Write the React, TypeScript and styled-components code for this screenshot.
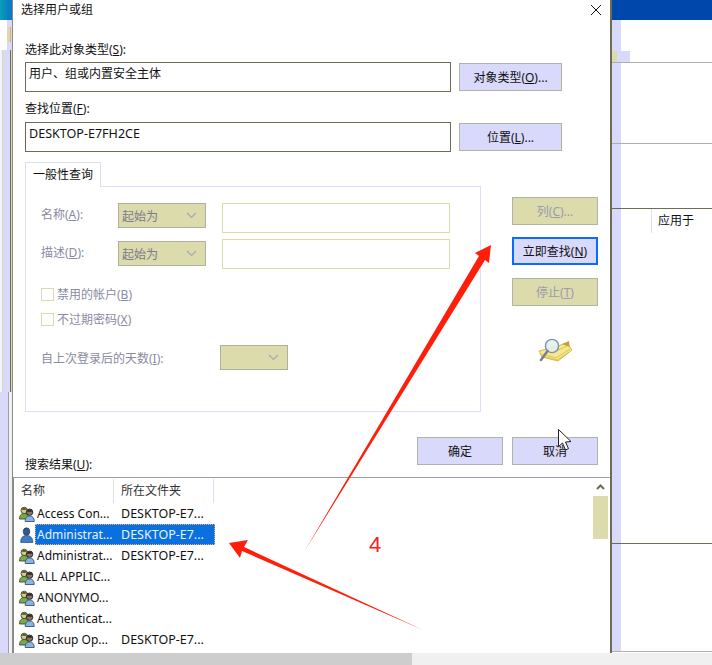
import React from "react";
import styled, { createGlobalStyle } from "styled-components";

const FONT = `"Noto Sans", "Noto Sans CJK SC", sans-serif`;
const LAVENDER = "#d9d9fb";
const KHAKI = "#dbdbab";
const OLIVE = "#6d6d55";

const Global = createGlobalStyle`
  html, body { margin: 0; padding: 0; background: #fff; }
  body { font-family: ${FONT}; font-size: 12px; color: #111; }
  * { box-sizing: border-box; }
`;

const Page = styled.div`
  position: relative;
  width: 712px;
  height: 665px;
  overflow: hidden;
  display: flex;
  flex-direction: column;
`;
const Workspace = styled.div`
  display: flex;
  height: 653px;
`;
const LeftStrip = styled.div`
  width: 12px;
  display: flex;
  flex-direction: column;
`;
const StripBlue = styled.div`
  height: 20px;
  background: linear-gradient(90deg, #0aa0b8 0, #0a7fc4 8px, #0a78c8 12px);
`;
const StripTop = styled.div`
  height: 30px;
  padding: 7px 1px 0 7px;
  background: linear-gradient(90deg, #fff 0 7px, ${LAVENDER} 7px);
`;
const StripTab = styled.div`
  height: 15px;
  background: ${KHAKI};
  border-right: 1px solid #e0b060;
`;
const StripMid = styled.div`
  height: 342px;
  background: linear-gradient(90deg, #f4f4ff 0 2px, ${KHAKI} 2px 3px, ${LAVENDER} 3px 10px, ${OLIVE} 10px 11px, ${KHAKI} 11px);
`;
const StripLow = styled.div`
  flex: 1;
  background: linear-gradient(90deg, ${LAVENDER} 0 8px, #a0a0a0 8px 9px, #f0f0f8 9px);
`;

const Dialog = styled.div`
  width: 600px;
  background: #fff;
  border-left: 1px solid #8a8a8a;
  border-right: 2px solid ${OLIVE};
  display: flex;
  flex-direction: column;
`;
const TitleBar = styled.div`
  height: 20px;
  padding: 0 9px 0 8px;
  display: flex;
  align-items: center;
  justify-content: space-between;
  line-height: 20px;
`;
const TopForm = styled.div`
  margin: 22px 0 0 12px;
  display: grid;
  grid-template-columns: 426px 103px;
  column-gap: 8px;
  align-items: center;
`;
const FieldLabel = styled.div<{ $next?: boolean }>`
  grid-column: 1 / 3;
  height: 16px;
  line-height: 16px;
  margin-top: ${(p) => (p.$next ? 9 : 0)}px;
  margin-bottom: ${(p) => (p.$next ? 5 : 4)}px;
`;
const ReadBox = styled.div<{ $wide?: boolean }>`
  height: 30px;
  border: 1px solid ${OLIVE};
  padding: 2px 3px;
  line-height: 18px;
  font-size: ${(p) => (p.$wide ? 12.55 : 12)}px;
`;
const Button = styled.div<{ $kind?: "focus" | "disabled"; $w?: number }>`
  height: 28px;
  ${(p) => (p.$w ? `width: ${p.$w}px;` : "")}
  display: flex;
  align-items: center;
  justify-content: center;
  padding-bottom: 1px;
  background: ${(p) => (p.$kind === "disabled" ? KHAKI : LAVENDER)};
  border: ${(p) => (p.$kind === "focus" ? "2px solid #0a6cff" : "1px solid #b2b2a6")};
  color: ${(p) => (p.$kind === "disabled" ? "#9a9ab0" : "#111")};
`;
const Main = styled.div`
  margin: 10px 0 0 12px;
  display: grid;
  grid-template-columns: 456px 86px;
  column-gap: 31px;
`;
const Tab = styled.div`
  width: 76px;
  height: 25px;
  margin-bottom: -1px;
  padding-bottom: 2px;
  position: relative;
  z-index: 1;
  background: #fff;
  border: 1px solid #dcdcfc;
  border-bottom: none;
  display: flex;
  align-items: center;
  justify-content: center;
`;
const Panel = styled.div`
  height: 226px;
  border: 1px solid #dcdcfc;
  padding: 16px 0 0 15px;
  color: #8a8aa0;
`;
const SearchRow = styled.div<{ $top?: number }>`
  display: grid;
  grid-template-columns: 77px 88px 228px;
  column-gap: 0;
  margin-top: ${(p) => p.$top ?? 0}px;
  height: 30px;
`;
const RowLabel = styled.div<{ $drop?: number }>`
  height: 25px;
  line-height: 24px;
  margin-top: ${(p) => p.$drop ?? 0}px;
`;
const Select = styled.div<{ $drop?: number; $w?: number }>`
  height: 25px;
  width: ${(p) => p.$w ?? 88}px;
  margin-top: ${(p) => p.$drop ?? 0}px;
  background: ${KHAKI};
  border: 1px solid #b0b0a0;
  padding: 0 8px 0 3px;
  display: flex;
  align-items: center;
  justify-content: space-between;
  color: #7a7a90;
`;
const TextEntry = styled.div`
  height: 30px;
  width: 228px;
  margin-left: 16px;
  background: #fff;
  border: 1px solid ${KHAKI};
`;
const CheckRow = styled.div<{ $top: number }>`
  height: 13px;
  margin-top: ${(p) => p.$top}px;
  display: flex;
  align-items: center;
  gap: 3px;
  line-height: 13px;
`;
const CheckBox = styled.div`
  width: 13px;
  height: 13px;
  border: 1px solid ${KHAKI};
  background: #fff;
`;
const DaysRow = styled.div`
  margin-top: 19px;
  display: flex;
  align-items: center;
`;
const DaysLabel = styled.div`
  width: 179px;
`;
const SideColumn = styled.div`
  padding-top: 35px;
  display: flex;
  flex-direction: column;
`;
const SideGap = styled.div<{ $h: number }>`
  height: ${(p) => p.$h}px;
`;
const SearchArt = styled.div`
  margin: 32px 0 0 26px;
  height: 26px;
`;
const Footer = styled.div`
  height: 65px;
  padding: 0 12px 0 12px;
  display: flex;
  align-items: flex-end;
  justify-content: space-between;
`;
const ResultsLabel = styled.div`
  line-height: 16px;
  margin-bottom: 4px;
`;
const FooterButtons = styled.div`
  display: flex;
  gap: 9px;
  margin-bottom: 12px;
`;
const ListBox = styled.div`
  flex: 1;
  min-height: 0;
  border-top: 1px solid #9c9ca4;
  border-left: 1px solid #8a8a8a;
  margin-left: 0;
  display: flex;
  justify-content: space-between;
`;
const ListBody = styled.div`
  width: 580px;
  padding-top: 1px;
`;
const HeaderRow = styled.div`
  height: 24px;
  display: flex;
  color: #333;
`;
const HeaderCell = styled.div<{ $w: number }>`
  width: ${(p) => p.$w}px;
  padding-left: 7px;
  line-height: 24px;
  border-right: 1px solid #dcdcfc;
`;
const ResultRow = styled.div`
  height: 21px;
  padding-left: 5px;
  display: flex;
  align-items: center;
`;
const ResultIcon = styled.div`
  width: 16px;
  height: 16px;
  margin-right: 0;
  flex: none;
`;
const ResultCells = styled.div<{ $on?: boolean }>`
  width: 180px;
  height: 21px;
  margin-left: 0;
  display: flex;
  align-items: center;
  color: ${(p) => (p.$on ? "#e8f2ff" : "#111")};
  background: ${(p) => (p.$on ? "#0a70e0" : "transparent")};
  outline: ${(p) => (p.$on ? "1px dotted #e8b860" : "none")};
  outline-offset: -1px;
`;
const NameCell = styled.div`
  width: 86px;
  padding-left: 2px;
  white-space: nowrap;
  overflow: hidden;
`;
const FolderCell = styled.div`
  white-space: nowrap;
  font-size: 12.5px;
`;
const ScrollBar = styled.div`
  width: 15px;
  margin-right: 2px;
  display: flex;
  flex-direction: column;
  align-items: center;
`;
const ScrollArrow = styled.div`
  height: 18px;
  padding-top: 6px;
  display: flex;
`;
const ScrollThumb = styled.div`
  width: 15px;
  height: 43px;
  background: ${KHAKI};
`;
const RightPane = styled.div`
  flex: 1;
  display: flex;
  flex-direction: column;
`;
const BlueBar = styled.div`
  height: 20px;
  background: #0047ab;
`;
const RightSection = styled.div<{ $h: number; $dark?: boolean }>`
  height: ${(p) => p.$h}px;
  border-bottom: 1px solid ${(p) => (p.$dark ? OLIVE : "#b0b0a6")};
  background: linear-gradient(90deg, ${LAVENDER} 9px, #fff 9px);
  display: flex;
  flex-direction: column;
  justify-content: flex-start;
`;
const RightTabMark = styled.div`
  width: 18px;
  height: 11px;
  margin-top: auto;
  background: linear-gradient(90deg, ${KHAKI} 5px, ${LAVENDER} 5px);
`;
const AppliedHead = styled.div`
  margin-left: 39px;
  height: 24px;
  padding-left: 6px;
  line-height: 24px;
  border-left: 1px solid #dcdcfc;
`;
const BottomScroll = styled.div`
  height: 12px;
  background: #f0f0f0;
`;
const BottomThumb = styled.div`
  width: 412px;
  height: 12px;
  background: #cdcdcd;
`;
const Annotation = styled.svg`
  position: absolute;
  left: 0;
  top: 0;
  width: 712px;
  height: 665px;
  pointer-events: none;
`;
const StepNumber = styled.div`
  position: absolute;
  left: 369px;
  top: 531px;
  font-family: "Liberation Sans", sans-serif;
  font-size: 22px;
  line-height: 28px;
  color: #ff2020;
`;

const U = styled.span`
  text-decoration: underline;
  text-underline-offset: 1px;
  text-decoration-thickness: 1px;
`;

const Chevron = () => (
  <svg width="11" height="7" viewBox="0 0 11 7">
    <path d="M1 1l4.5 4.5L10 1" fill="none" stroke="#a8a8b4" strokeWidth="1.2" />
  </svg>
);

const GroupIcon = () => (
  <svg width="16" height="16" viewBox="0 0 16 16">
    <circle cx="5.2" cy="4.4" r="3.2" fill="#d8c88a" stroke="#3a4a28" strokeWidth="0.9" />
    <path d="M2 3.6c.6-2 5.4-2.4 6.4 0-2 .6-4.4.6-6.4 0z" fill="#5a5a30" />
    <path d="M0.5 13c0-4 2-5.5 4.7-5.5S10 9 10 13z" fill="#7aa84a" stroke="#34502a" strokeWidth="0.9" />
    <circle cx="10.6" cy="6.2" r="3.2" fill="#8a7464" stroke="#222" strokeWidth="0.9" />
    <path d="M7.6 5.4c.7-2 5.2-2.2 6 0-2 .6-4 .6-6 0z" fill="#2a2a2a" />
    <path d="M6.2 15.5c0-4 1.8-5.5 4.4-5.5s4.6 1.5 4.6 5.5z" fill="#8ab4e0" stroke="#34547a" strokeWidth="0.9" />
  </svg>
);

const UserIcon = () => (
  <svg width="16" height="16" viewBox="0 0 16 16">
    <ellipse cx="7.5" cy="4.6" rx="3.3" ry="3.8" fill="#2e5a8e" stroke="#1c3a60" strokeWidth="0.7" />
    <path d="M1.8 15.5c-.4-4.6 2-7 5.7-7s6.6 2.4 6.3 7z" fill="#3f7cc4" stroke="#1f4a80" strokeWidth="0.7" />
  </svg>
);

const SearchFolder = () => (
  <svg width="36" height="26" viewBox="0 0 36 26">
    <path d="M1 13l12-3 16-5 5 7-14 11-16-4z" fill="#f6e88e" stroke="#c8a838" strokeWidth="0.8" />
    <path d="M3 16l15 4 14-9M5 18.6l14 3.4 12-8M16 14l13-6" fill="none" stroke="#d8b848" strokeWidth="0.8" />
    <path d="M24 6l7-3 .6 6z" fill="#c8a030" />
    <circle cx="14" cy="8" r="6.6" fill="#e4f0ec" fillOpacity="0.85" stroke="#7a94b4" strokeWidth="1.4" />
    <path d="M9.5 13L3 22" stroke="#7c7c8c" strokeWidth="2.4" strokeLinecap="round" />
  </svg>
);

const rows = [
  { name: "Access Con...", folder: "DESKTOP-E7..." },
  { name: "Administrat...", folder: "DESKTOP-E7...", selected: true },
  { name: "Administrat...", folder: "DESKTOP-E7..." },
  { name: "ALL APPLIC...", folder: "" },
  { name: "ANONYMO...", folder: "" },
  { name: "Authenticat...", folder: "" },
  { name: "Backup Op...", folder: "DESKTOP-E7..." },
];

export default function App() {
  return (
    <Page>
      <Global />
      <Workspace>
        <LeftStrip>
          <StripBlue />
          <StripTop>
            <StripTab />
          </StripTop>
          <StripMid />
          <StripLow />
        </LeftStrip>
        <Dialog>
          <TitleBar>
            <span>选择用户或组</span>
            <svg width="10" height="10" viewBox="0 0 10 10">
              <path d="M0 0l10 10M10 0L0 10" stroke="#111" strokeWidth="1" />
            </svg>
          </TitleBar>
          <TopForm>
            <FieldLabel>选择此对象类型(<U>S</U>):</FieldLabel>
            <ReadBox>用户、组或内置安全主体</ReadBox>
            <Button><span>对象类型(<U>O</U>)...</span></Button>
            <FieldLabel $next>查找位置(<U>F</U>):</FieldLabel>
            <ReadBox $wide>DESKTOP-E7FH2CE</ReadBox>
            <Button><span>位置(<U>L</U>)...</span></Button>
          </TopForm>
          <Main>
            <div>
              <Tab>一般性查询</Tab>
              <Panel>
                <SearchRow>
                  <RowLabel>名称(<U>A</U>):</RowLabel>
                  <Select>起始为<Chevron /></Select>
                  <TextEntry />
                </SearchRow>
                <SearchRow $top={6}>
                  <RowLabel $drop={2}>描述(<U>D</U>):</RowLabel>
                  <Select $drop={2}>起始为<Chevron /></Select>
                  <TextEntry />
                </SearchRow>
                <CheckRow $top={19}><CheckBox /><span>禁用的帐户(<U>B</U>)</span></CheckRow>
                <CheckRow $top={12}><CheckBox /><span>不过期密码(<U>X</U>)</span></CheckRow>
                <DaysRow>
                  <DaysLabel>自上次登录后的天数(<U>I</U>):</DaysLabel>
                  <Select $w={68}><span /><Chevron /></Select>
                </DaysRow>
              </Panel>
            </div>
            <SideColumn>
              <Button $kind="disabled"><span>列(<U>C</U>)...</span></Button>
              <SideGap $h={12} />
              <Button $kind="focus"><span>立即查找(<U>N</U>)</span></Button>
              <SideGap $h={13} />
              <Button $kind="disabled"><span>停止(<U>T</U>)</span></Button>
              <SearchArt><SearchFolder /></SearchArt>
            </SideColumn>
          </Main>
          <Footer>
            <ResultsLabel>搜索结果(<U>U</U>):</ResultsLabel>
            <FooterButtons>
              <Button $w={86}>确定</Button>
              <Button $w={86}>取消</Button>
            </FooterButtons>
          </Footer>
          <ListBox>
            <ListBody>
              <HeaderRow>
                <HeaderCell $w={100}>名称</HeaderCell>
                <HeaderCell $w={100}>所在文件夹</HeaderCell>
              </HeaderRow>
              {rows.map((r, i) => (
                <ResultRow key={i}>
                  <ResultIcon>{r.selected ? <UserIcon /> : <GroupIcon />}</ResultIcon>
                  <ResultCells $on={r.selected}>
                    <NameCell>{r.name}</NameCell>
                    <FolderCell>{r.folder}</FolderCell>
                  </ResultCells>
                </ResultRow>
              ))}
            </ListBody>
            <ScrollBar>
              <ScrollArrow>
                <svg width="9" height="6" viewBox="0 0 9 6">
                  <path d="M1 5l3.5-3.5L8 5" fill="none" stroke={OLIVE} strokeWidth="2" />
                </svg>
              </ScrollArrow>
              <ScrollThumb />
            </ScrollBar>
          </ListBox>
        </Dialog>
        <RightPane>
          <BlueBar />
          <RightSection $h={43}><RightTabMark /></RightSection>
          <RightSection $h={81} />
          <RightSection $h={65} $dark />
          <RightSection $h={335} $dark><AppliedHead>应用于</AppliedHead></RightSection>
          <RightSection $h={108} />
        </RightPane>
      </Workspace>
      <BottomScroll><BottomThumb /></BottomScroll>
      <Annotation viewBox="0 0 712 665">
        <polygon points="304,552 479,256 475,253 491,245 489,263 485,260" fill="#ff1e0a" />
        <polygon points="423,630 244,547 248,540 229,543 240,558 242,551" fill="#ff1e0a" />
        <path d="M558.5 429.5v17l4-3.5 3 7 3-1.3-3-6.7 5.5-.5z" fill="#fff" stroke="#222" strokeWidth="1" />
      </Annotation>
      <StepNumber>4</StepNumber>
    </Page>
  );
}
